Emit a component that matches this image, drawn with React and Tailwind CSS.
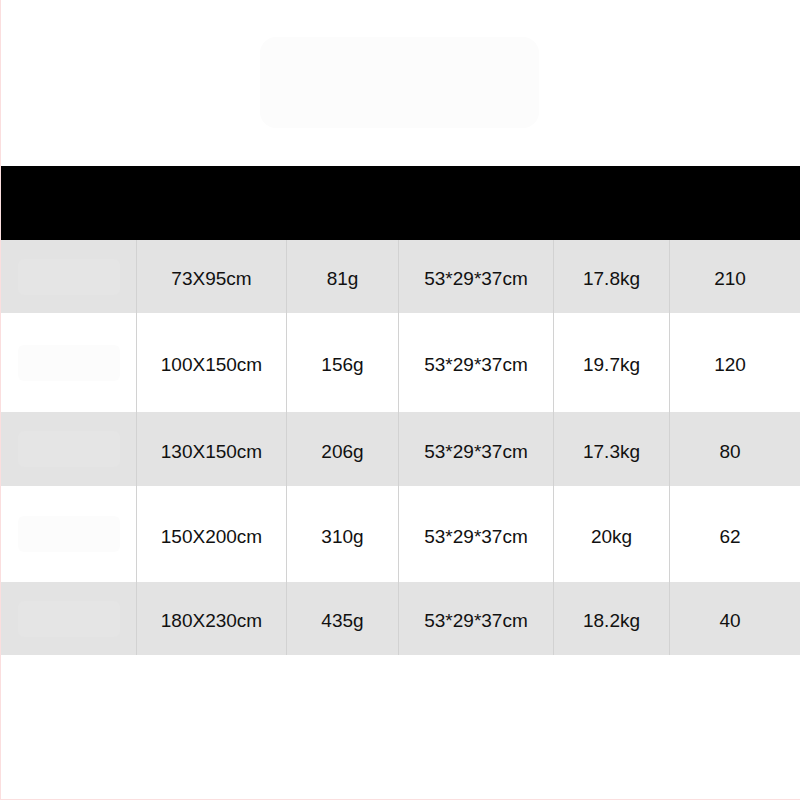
const rows = [
  { size: "73X95cm", weight: "81g", box: "53*29*37cm", gross: "17.8kg", qty: "210", h: "h-[73px]", gray: true },
  { size: "100X150cm", weight: "156g", box: "53*29*37cm", gross: "19.7kg", qty: "120", h: "h-[99px]", gray: false },
  { size: "130X150cm", weight: "206g", box: "53*29*37cm", gross: "17.3kg", qty: "80", h: "h-[74px]", gray: true },
  { size: "150X200cm", weight: "310g", box: "53*29*37cm", gross: "20kg", qty: "62", h: "h-[96px]", gray: false },
  { size: "180X230cm", weight: "435g", box: "53*29*37cm", gross: "18.2kg", qty: "40", h: "h-[73px]", gray: true },
]

function Cell({ w, children, last }) {
  return (
    <div className={`${w} h-full flex items-center justify-center pt-[6px] ${last ? "pr-[10px]" : "border-r border-[#d2d2d2]"}`}>
      {children}
    </div>
  )
}

export default function App() {
  return (
    <div className="w-[800px] h-[800px] bg-white relative overflow-hidden font-['Liberation_Sans',Arial,sans-serif] text-[#111] border-l border-b border-[#fbdede]">
      {/* faded logo block */}
      <div className="h-[166px] pt-[37px]">
        <div className="ml-[259px] w-[279px] h-[91px] rounded-2xl bg-[#fcfcfc]" />
      </div>

      {/* header */}
      <div className="h-[74px] bg-black" />

      {rows.map((r, i) => (
        <div key={i} className={`flex ${r.h} ${r.gray ? "bg-[#e3e3e3]" : "bg-white"} text-[19px]`}>
          <Cell w="w-[136px]">
            <div className={`w-[102px] h-[36px] -mt-[6px] rounded-md ${r.gray ? "bg-[#e5e5e5]" : "bg-[#fcfcfc]"}`} />
          </Cell>
          <Cell w="w-[150px]">{r.size}</Cell>
          <Cell w="w-[112px]">{r.weight}</Cell>
          <Cell w="w-[155px]">{r.box}</Cell>
          <Cell w="w-[116px]">{r.gross}</Cell>
          <Cell w="flex-1" last>{r.qty}</Cell>
        </div>
      ))}
    </div>
  )
}
